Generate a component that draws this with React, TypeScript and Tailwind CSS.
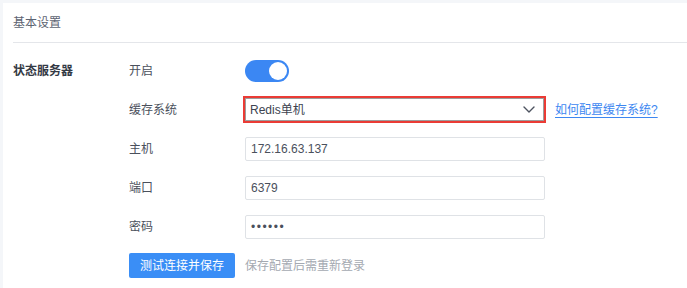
import { ReactNode } from "react"

export default function App() {
    return (
        <div className="w-full h-[288px] bg-[#f4f6f9] pt-[3px] pl-[3px] font-['Liberation_Sans','Noto_Sans_CJK_SC',sans-serif] text-[12px] overflow-hidden">
            <div className="bg-white h-full pl-[10px]">

                <div className="h-[40px] border-b border-[#e4e6ea] flex items-center text-[#5d6472]">
                    基本设置
                </div>

                <div className="flex pt-[8px]">
                    <div className="w-[116px] h-[39px] flex items-center font-bold text-[#333944]">
                        状态服务器
                    </div>

                    <div className="flex flex-col">
                        <FormRow label="开启">
                            <div className="w-[44px] h-[22px] rounded-full bg-[#3b87f3] flex items-center justify-end pr-[2px]">
                                <div className="w-[18px] h-[18px] rounded-full bg-white" />
                            </div>
                        </FormRow>

                        <FormRow label="缓存系统">
                            <div className="flex items-center gap-[11px]">
                                <div className="relative w-[299px] h-[23px]">
                                    <div className="absolute -inset-[2px] border-2 border-[#ea3b35]" />
                                    <div className="h-full border-[1.5px] border-[#9d9d9d] shadow-[0_0_2px_rgba(0,0,0,0.45)] flex items-center justify-between pl-[4px] pr-[8px] text-[#3d4350]">
                                        <span>Redis单机</span>
                                        <svg width="12" height="7" viewBox="0 0 12 7" fill="none">
                                            <path d="M1 1l5 5 5-5" stroke="#4d5360" strokeWidth="1.4" strokeLinecap="round" strokeLinejoin="round" />
                                        </svg>
                                    </div>
                                </div>
                                <a href="" className="text-[#3d87f1] underline underline-offset-[3px] decoration-[#3d87f1]">如何配置缓存系统?</a>
                            </div>
                        </FormRow>

                        <FormRow label="主机">
                            <TextBox value="172.16.63.137" />
                        </FormRow>

                        <FormRow label="端口">
                            <TextBox value="6379" />
                        </FormRow>

                        <FormRow label="密码">
                            <TextBox value="••••••" small />
                        </FormRow>

                        <div className="h-[39px] flex items-center gap-[10px]">
                            <button className="h-[25px] w-[106px] rounded-[2px] bg-[#3a8ef6] text-white">测试连接并保存</button>
                            <span className="text-[#a4a9b1]">保存配置后需重新登录</span>
                        </div>
                    </div>
                </div>
            </div>
        </div>
    )
}

function FormRow({label, children}: {label: string, children: ReactNode}) {
    return (
        <div className="h-[39px] flex items-center">
            <div className="w-[116px] text-[#4a505c]">{label}</div>
            {children}
        </div>
    )
}

function TextBox({value, small}: {value: string, small?: boolean}) {
    return (
        <div className={small
            ? "w-[300px] h-[24px] border border-[#dfe2e6] rounded-[2px] flex items-center pl-[5px] text-[#4a505c] text-[12px] tracking-[1.5px]"
            : "w-[300px] h-[24px] border border-[#dfe2e6] rounded-[2px] flex items-center pl-[5px] text-[#4a505c]"}>
            {value}
        </div>
    )
}
